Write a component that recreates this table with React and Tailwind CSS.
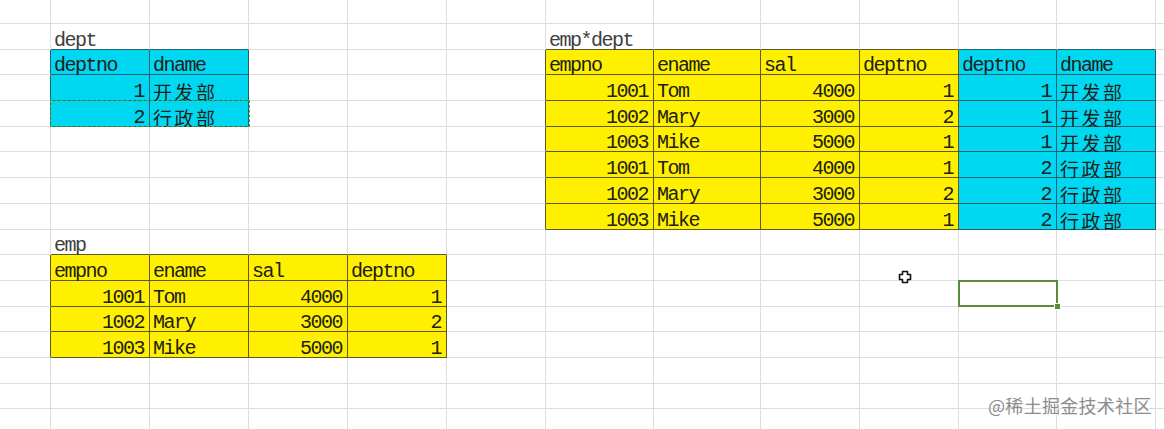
import React from "react";

const YELLOW = "#fff000";
const CYAN = "#00d8f2";

// sheet cells: "row,col" -> { t, right, bg, cjk }
const cells = {};
const put = (r, c, t, bg, right = false, cjk = false) => {
  cells[`${r},${c}`] = { t, bg, right, cjk };
};

// dept
put(1, 1, "dept");
put(2, 1, "deptno", CYAN);
put(2, 2, "dname", CYAN);
[["1", "开发部"], ["2", "行政部"]].forEach(([no, name], i) => {
  put(3 + i, 1, no, CYAN, true);
  put(3 + i, 2, name, CYAN, false, true);
});

// emp
const emp = [
  ["1001", "Tom", "4000", "1"],
  ["1002", "Mary", "3000", "2"],
  ["1003", "Mike", "5000", "1"],
];
put(9, 1, "emp");
["empno", "ename", "sal", "deptno"].forEach((h, i) => put(10, 1 + i, h, YELLOW));
emp.forEach((row, r) =>
  row.forEach((v, c) => put(11 + r, 1 + c, v, YELLOW, c !== 1))
);

// emp*dept
put(1, 6, "emp*dept");
["empno", "ename", "sal", "deptno"].forEach((h, i) => put(2, 6 + i, h, YELLOW));
put(2, 10, "deptno", CYAN);
put(2, 11, "dname", CYAN);
const depts = [["1", "开发部"], ["2", "行政部"]];
depts.forEach((d, di) =>
  emp.forEach((row, ei) => {
    const r = 3 + di * 3 + ei;
    row.forEach((v, c) => put(r, 6 + c, v, YELLOW, c !== 1));
    put(r, 10, d[0], CYAN, true);
    put(r, 11, d[1], CYAN, false, true);
  })
);

const ROWS = 17;
const COLS = 13;
const GRID = "#dedede";
const edge = (bg) => (bg === CYAN ? "#22606e" : "#5e5824");

function Cell({ r, c }) {
  const cell = cells[`${r},${c}`];
  const bg = cell?.bg;
  const right = cells[`${r},${c + 1}`]?.bg;
  const below = cells[`${r + 1},${c}`]?.bg;
  const rc = bg || right ? edge(bg || right) : GRID;
  const bc = bg || below ? edge(bg || below) : GRID;

  return (
    <div
      className={`flex items-end overflow-visible whitespace-nowrap border-r border-b pl-[3px] pr-[5px] ${
        cell?.right ? "justify-end" : "justify-start"
      } ${cell && !cell.bg ? "text-[#3e3e3e]" : "text-[#20201a]"}`}
      style={{ background: bg || "#ffffff", borderRightColor: rc, borderBottomColor: bc }}
    >
      {cell &&
        (cell.cjk ? (
          <span className="font-['Noto_Sans_CJK_SC',sans-serif] text-[19px] tracking-[2.5px] leading-[16px]">
            {cell.t}
          </span>
        ) : (
          <span>{cell.t}</span>
        ))}
    </div>
  );
}

export default function App() {
  return (
    <div className="relative h-[429px] w-[1164px] overflow-hidden bg-white font-['Liberation_Mono',monospace] text-[20px] leading-[16px] tracking-[-1.5px]">
      <div className="grid grid-cols-[51px_99px_99px_99px_99px_99px_108px_107px_99px_99px_98px_99px_7px] grid-rows-[24px_repeat(16,25.7px)]">
        {Array.from({ length: ROWS }).map((_, r) =>
          Array.from({ length: COLS }).map((_, c) => <Cell key={`${r}-${c}`} r={r} c={c} />)
        )}
      </div>

      {/* copy marquee on dept row 2 */}
      <div className="absolute left-[50px] top-[100px] h-[27px] w-[200px] border border-dashed border-[#3aa84e]" />

      {/* active cell */}
      <div className="absolute left-[958px] top-[280px] h-[27px] w-[100px] border-2 border-[#5b8c3c]">
        <div className="absolute -bottom-[4px] -right-[4px] h-[5px] w-[5px] bg-[#5b8c3c] outline outline-1 outline-white" />
      </div>

      {/* mouse cursor */}
      <svg className="absolute left-[898px] top-[270px]" width="14" height="14" viewBox="0 0 14 14">
        <path
          d="M4.5 1.5h5v3h3v5h-3v3h-5v-3h-3v-5h3z"
          fill="#fff"
          stroke="#111"
          strokeWidth="1.6"
          strokeLinejoin="round"
        />
      </svg>

      {/* watermark */}
      <div className="absolute left-[988px] top-[394px] font-['Noto_Sans_CJK_SC',sans-serif] text-[18px] leading-[22px] tracking-[0.3px] text-[#8c8c8c] [text-shadow:0_0_2px_#fff]">
        @稀土掘金技术社区
      </div>
    </div>
  );
}
